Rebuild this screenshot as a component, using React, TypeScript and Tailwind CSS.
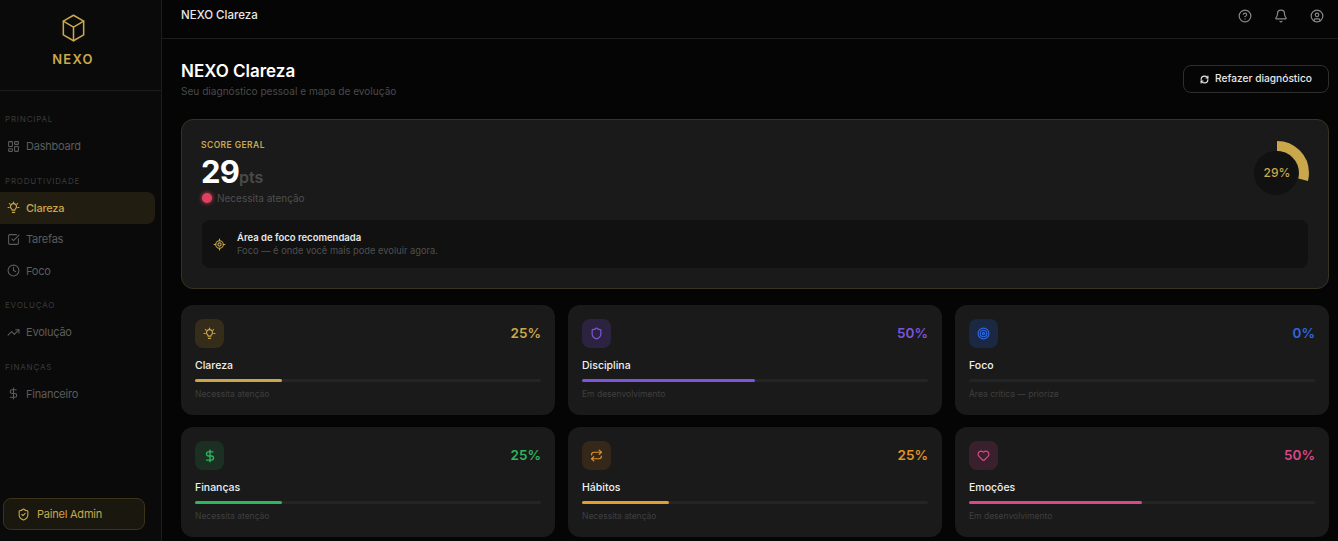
import { Bell, CircleHelp, CircleUser, Clock, DollarSign, Heart, LayoutDashboard, LocateFixed, RefreshCw, Repeat, Shield, ShieldCheck, SquareCheckBig, Target, TrendingUp } from 'lucide-react';
import type { ReactNode } from 'react';

function BulbIcon({ className }: { className?: string }) {
  return (
    <svg viewBox="0 0 24 24" fill="none" stroke="currentColor" strokeWidth="2.2" strokeLinecap="round" strokeLinejoin="round" className={className}>
      <path d="M12 2v1.5M4.5 4.8l1.1 1.1M19.5 4.8l-1.1 1.1M2 12h2M20 12h2" />
      <path d="M15.5 14.5a5.5 5.5 0 1 0-7 0c.7.6 1 1.3 1 2.5h5c0-1.2.3-1.9 1-2.5Z" />
      <path d="M10 21h4" />
    </svg>
  );
}

function LogoIcon() {
  return (
    <svg viewBox="0 0 24 29" fill="none" stroke="#c9a84c" strokeWidth="1.6" strokeLinecap="round" strokeLinejoin="round" className="h-[28px] w-[23px]">
      <path d="M12 1.2 22.6 7.4v14.2L12 27.8 1.4 21.6V7.4Z" />
      <path d="M1.4 7.4 12 13.6l10.6-6.2M12 13.6v14.2" />
    </svg>
  );
}

function NavSection({ label, children }: { label: string; children: ReactNode }) {
  return (
    <div className="mb-[13.5px]">
      <p className="mb-[6.5px] h-[10px] pl-[5px] text-[8px] leading-[10px] tracking-[0.1em] text-[#3a3a3a]">{label}</p>
      {children}
    </div>
  );
}

function NavItem({ icon, label, active }: { icon: ReactNode; label: string; active?: boolean }) {
  return (
    <div
      className={`flex h-[31.5px] w-[155px] items-center gap-[6px] rounded-r-lg pl-[7px] text-[11px] tracking-[-0.02em] ${
        active ? 'bg-[#221d11] font-medium text-[#c9a84c]' : 'text-[#5c5c5c]'
      }`}
    >
      {icon}
      {label}
    </div>
  );
}

const areas = [
  { name: 'Clareza', pct: 25, note: 'Necessita atenção', text: 'text-[#c9a84c]', bar: 'bg-[#c9a84c]', tile: 'bg-[#352c1a]', icon: <BulbIcon className="size-[13px]" /> },
  { name: 'Disciplina', pct: 50, note: 'Em desenvolvimento', text: 'text-[#7c55d8]', bar: 'bg-[#7c55d8]', tile: 'bg-[#2c2340]', icon: <Shield className="size-[13px]" strokeWidth={2.2} /> },
  { name: 'Foco', pct: 0, note: 'Área crítica — priorize', text: 'text-[#2f66e0]', bar: 'bg-[#2f66e0]', tile: 'bg-[#1a2844]', icon: <Target className="size-[13px]" strokeWidth={2.2} /> },
  { name: 'Finanças', pct: 25, note: 'Necessita atenção', text: 'text-[#2fb45f]', bar: 'bg-[#2fb45f]', tile: 'bg-[#1b3022]', icon: <DollarSign className="size-[14px]" strokeWidth={2.4} /> },
  { name: 'Hábitos', pct: 25, note: 'Necessita atenção', text: 'text-[#e0922a]', bar: 'bg-[#e0a030]', tile: 'bg-[#35281a]', icon: <Repeat className="size-[13px]" strokeWidth={2.2} /> },
  { name: 'Emoções', pct: 50, note: 'Em desenvolvimento', text: 'text-[#d9488a]', bar: 'bg-[#d9488a]', tile: 'bg-[#38202c]', icon: <Heart className="size-[13px]" strokeWidth={2.2} /> },
];

export default function App() {
  return (
    <div className="flex h-[541px] w-[1338px] overflow-hidden bg-[#050505] font-['Inter',sans-serif]">
      <aside className="flex w-[162px] shrink-0 flex-col border-r border-[#1c1c1c] bg-[#0a0a0a]">
        <div className="flex h-[91px] flex-col items-center border-b border-[#1c1c1c] pr-[15px] pt-[14px]">
          <LogoIcon />
          <span className="mt-[9px] text-[13px] font-semibold leading-[16px] tracking-[0.1em] text-[#c9a84c]">NEXO</span>
        </div>
        <nav className="flex-1 pt-[23px]">
          <NavSection label="PRINCIPAL">
            <NavItem icon={<LayoutDashboard className="size-[13px]" />} label="Dashboard" />
          </NavSection>
          <NavSection label="PRODUTIVIDADE">
            <NavItem active icon={<BulbIcon className="size-[13px]" />} label="Clareza" />
            <NavItem icon={<SquareCheckBig className="size-[13px]" />} label="Tarefas" />
            <NavItem icon={<Clock className="size-[13px]" />} label="Foco" />
          </NavSection>
          <NavSection label="EVOLUÇÃO">
            <NavItem icon={<TrendingUp className="size-[13px]" />} label="Evolução" />
          </NavSection>
          <NavSection label="FINANÇAS">
            <NavItem icon={<DollarSign className="size-[13px]" />} label="Financeiro" />
          </NavSection>
        </nav>
        <div className="px-[3px] pb-[11px]">
          <div className="flex h-[32px] w-[142px] items-center gap-[7px] rounded-lg border border-[#3d3319] bg-[#1a170f] pl-[13px] text-[11px] tracking-[-0.02em] text-[#c9a84c]">
            <ShieldCheck className="size-[13px]" />
            Painel Admin
          </div>
        </div>
      </aside>

      <div className="flex min-w-0 flex-1 flex-col">
        <header className="flex h-[39px] shrink-0 items-center justify-between border-b border-[#1c1c1c] pb-[6px] pl-[19px] pr-[14px]">
          <span className="text-[11.5px] font-medium text-[#e8e8e8]">NEXO Clareza</span>
          <div className="flex items-center gap-[22px] text-[#8a8a8a]">
            <CircleHelp className="size-[14px]" />
            <Bell className="size-[14px]" />
            <CircleUser className="size-[14px]" />
          </div>
        </header>

        <main className="flex-1 pl-[19px] pr-[9px] pt-[23px]">
          <div className="flex items-start justify-between">
            <div>
              <h1 className="text-[17px] font-semibold leading-[18px] text-white">NEXO Clareza</h1>
              <p className="mt-[5px] text-[10.1px] leading-[12px] text-[#4a4a4a]">Seu diagnóstico pessoal e mapa de evolução</p>
            </div>
            <button className="mt-[3px] flex h-[28px] w-[146px] items-center justify-center gap-[6px] rounded-lg border border-[#2e2e2e] text-[10.2px] font-medium text-[#e8e8e8]">
              <RefreshCw className="size-[9px]" strokeWidth={3} />
              Refazer diagnóstico
            </button>
          </div>

          <section className="mt-[22px] h-[170px] rounded-xl border border-[#3a3220] bg-[#1a1a1a] pl-[19px] pr-[20px] pt-[20px]">
            <div className="flex items-start justify-between">
              <div>
                <p className="text-[8.5px] font-semibold leading-[10px] tracking-[0.05em] text-[#c9a84c]">SCORE GERAL</p>
                <div className="mt-[3px] flex items-end">
                  <span className="text-[31px] font-bold leading-[38px] tracking-tight text-white">29</span>
                  <span className="mb-[5px] text-[16px] font-semibold leading-[18px] text-[#4a4a4a]">pts</span>
                </div>
                <div className="flex items-center gap-[5px] pl-[1px] text-[10px] leading-[14px] text-[#4f4f4f]">
                  <span className="size-[10px] rounded-full bg-[#e0405f] shadow-[0_0_4px_#e0405f]" />
                  Necessita atenção
                </div>
              </div>
              <div className="relative mr-[-1px] mt-[1px] size-[64px]">
                <svg viewBox="0 0 64 64" className="size-full -rotate-90">
                  <circle cx="32" cy="32" r="27" fill="none" stroke="#c9a84c" strokeWidth="10" strokeDasharray="49.2 200" />
                  <circle cx="32" cy="31" r="22" fill="#111111" />
                </svg>
                <span className="absolute inset-0 flex items-center justify-center text-[12px] font-medium text-[#c9a84c]">29%</span>
              </div>
            </div>
            <div className="ml-[1px] mt-[15px] flex h-[48px] items-center gap-[11px] rounded-lg bg-[#111111] px-[11px]">
              <LocateFixed className="size-[13px] text-[#c9a84c]" />
              <div>
                <p className="text-[9.5px] font-semibold leading-[13px] text-[#e8e8e8]">Área de foco recomendada</p>
                <p className="text-[9.3px] leading-[14px] text-[#4f4f4f]">Foco — é onde você mais pode evoluir agora.</p>
              </div>
            </div>
          </section>

          <div className="mt-[16px] grid grid-cols-3 gap-x-[13px] gap-y-[12px]">
            {areas.map((a) => (
              <div key={a.name} className="h-[110px] rounded-xl bg-[#1a1a1a] px-[14px] pt-[14px]">
                <div className="flex items-start justify-between">
                  <div className={`flex size-[29px] items-center justify-center rounded-lg ${a.tile} ${a.text}`}>{a.icon}</div>
                  <span className={`text-[13.5px] font-semibold leading-[28px] ${a.text}`}>{a.pct}%</span>
                </div>
                <p className="mt-[11px] text-[10.5px] font-medium leading-[14px] text-[#f0f0f0]">{a.name}</p>
                <div className="mt-[6px] h-[3px] rounded-full bg-[#242424]">
                  <div className={`h-full rounded-full ${a.bar}`} style={{ width: `${a.pct}%` }} />
                </div>
                <p className="mt-[6px] text-[8.5px] leading-[12px] text-[#3f3f3f]">{a.note}</p>
              </div>
            ))}
          </div>
        </main>
      </div>
    </div>
  );
}
